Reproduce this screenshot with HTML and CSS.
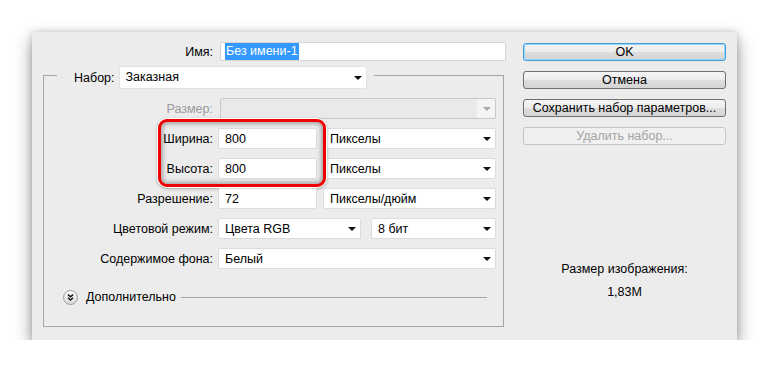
FILE: index.html
```html
<!DOCTYPE html>
<html lang="ru">
<head>
    <meta charset="UTF-8">
    <meta name="viewport" content="width=device-width, initial-scale=1.0">
    <title>Новый документ</title>
    <link rel="stylesheet" href="styles.css">
</head>
<body>
    <div class="dialog">
        <div class="main">
            <div class="name-row">
                <span class="label">Имя:</span>
                <div class="field name-field"><span class="selected">Без имени-1</span></div>
            </div>

            <fieldset class="preset">
                <legend class="preset-legend">
                    <span class="legend-label">Набор:</span>
                    <div class="select preset-select">Заказная<i class="arrow"></i></div>
                </legend>

                <div class="row">
                    <span class="label disabled">Размер:</span>
                    <div class="select select-disabled size-select"><i class="arrow"></i></div>
                </div>

                <div class="highlight-group">
                    <div class="row">
                        <span class="label">Ширина:</span>
                        <div class="field num-field">800</div>
                        <div class="select unit-select">Пикселы<i class="arrow"></i></div>
                    </div>
                    <div class="row">
                        <span class="label">Высота:</span>
                        <div class="field num-field">800</div>
                        <div class="select unit-select">Пикселы<i class="arrow"></i></div>
                    </div>
                    <div class="red-frame"></div>
                </div>

                <div class="row">
                    <span class="label">Разрешение:</span>
                    <div class="field num-field">72</div>
                    <div class="select unit-select">Пикселы/дюйм<i class="arrow"></i></div>
                </div>

                <div class="row">
                    <span class="label">Цветовой режим:</span>
                    <div class="select mode-select">Цвета RGB<i class="arrow"></i></div>
                    <div class="select bits-select">8 бит<i class="arrow"></i></div>
                </div>

                <div class="row">
                    <span class="label">Содержимое фона:</span>
                    <div class="select wide-select">Белый<i class="arrow"></i></div>
                </div>

                <div class="advanced">
                    <svg class="adv-icon" width="15" height="15" viewBox="0 0 15 15">
                        <defs>
                            <linearGradient id="advBg" x1="0" y1="0" x2="0" y2="1">
                                <stop offset="0" stop-color="#ffffff"/>
                                <stop offset="1" stop-color="#d6d6d6"/>
                            </linearGradient>
                        </defs>
                        <circle cx="7.5" cy="7.5" r="7" fill="url(#advBg)" stroke="#9a9a9a"/>
                        <path d="M5 4.6 L7.5 6.8 L10 4.6 M5 7.8 L7.5 10 L10 7.8" fill="none" stroke="#111" stroke-width="1.4"/>
                    </svg>
                    <span class="adv-text">Дополнительно</span>
                    <span class="adv-line"></span>
                </div>
            </fieldset>
        </div>

        <div class="side">
            <button class="btn btn-default">OK</button>
            <button class="btn">Отмена</button>
            <button class="btn">Сохранить набор параметров...</button>
            <button class="btn" disabled>Удалить набор...</button>

            <div class="info">
                <p>Размер изображения:</p>
                <p class="info-value">1,83M</p>
            </div>
        </div>
    </div>
</body>
</html>
```

FILE: styles.css
```css
* {
    box-sizing: border-box;
    margin: 0;
    padding: 0;
}

body {
    background-color: #ffffff;
    font-family: 'Liberation Sans', Arial, sans-serif;
    font-size: 12.5px;
    color: #000000;
}

.dialog {
    width: 705px;
    height: 308px;
    margin: 32px 0 0 32px;
    padding: 10px 11px 0 11px;
    background-color: #ececec;
    display: flex;
    box-shadow: 0 7px 16px rgba(0, 0, 0, 0.42), 0 0 6px rgba(0, 0, 0, 0.15);
}

.main {
    width: 463px;
}

.label {
    flex: none;
    text-align: right;
    white-space: nowrap;
}

.label.disabled {
    color: #9b9b9b;
}

.name-row {
    display: flex;
    align-items: center;
    height: 19px;
}

.name-row .label {
    width: 170px;
    margin-right: 7px;
}

.field,
.select {
    position: relative;
    height: 21px;
    line-height: 21px;
    padding-left: 6px;
    background-color: #ffffff;
    border: 1px solid #dcdcdc;
    border-radius: 2px;
    white-space: nowrap;
}

.name-field {
    width: 286px;
    height: 19px;
    line-height: 17px;
    padding-left: 4px;
    border-color: #d4d4d4;
}

.selected {
    display: inline-block;
    padding: 0 1px;
    background-color: #3399ff;
    color: #ffffff;
}

.arrow {
    position: absolute;
    right: 4px;
    top: 8px;
    width: 0;
    height: 0;
    border-left: 4px solid transparent;
    border-right: 4px solid transparent;
    border-top: 4px solid #111111;
}

/* fieldset with the preset selector in its legend */
.preset {
    width: 461px;
    padding: 0 7px 21px 0;
    border: 1px solid #a6a6a6;
}

.preset-legend {
    display: flex;
    align-items: center;
    margin-left: 13px;
    padding: 5px 7px 0 17px;
}

.preset-select {
    width: 248px;
    height: 23px;
    line-height: 21px;
    margin-left: 4px;
    border-color: #e2e2e2;
}

.preset-select .arrow {
    top: 9px;
}

.row {
    display: flex;
    align-items: center;
    height: 21px;
    margin-top: 9px;
}

.row .label {
    width: 169px;
    margin-right: 5px;
}

.size-select {
    width: 276px;
    margin-left: 2px;
    background: linear-gradient(to right, #e9e9e9 0, #e9e9e9 calc(100% - 18px), #f4f4f4 calc(100% - 18px));
    border-color: #c9c9c9;
}

.size-select .arrow {
    border-top-color: #a8a8a8;
}

.num-field {
    width: 99px;
}

.unit-select {
    width: 173px;
    margin-left: 6px;
}

.mode-select {
    width: 143px;
}

.bits-select {
    width: 125px;
    margin-left: 10px;
}

.wide-select {
    width: 278px;
}

.highlight-group {
    position: relative;
}

.red-frame {
    position: absolute;
    left: 114px;
    top: -9px;
    width: 168px;
    height: 68px;
    border: 3px solid #f00000;
    border-radius: 9px;
    box-shadow: 0 0 0 1px #ffffff, 0 1px 3px 1px rgba(0, 0, 0, 0.3), inset 0 0 4px 2px rgba(0, 0, 0, 0.3);
    pointer-events: none;
}

.advanced {
    display: flex;
    align-items: center;
    height: 16px;
    margin-top: 20px;
    padding-left: 19px;
    padding-right: 9px;
}

.adv-icon {
    flex: none;
    margin-right: 8px;
}

.adv-text {
    flex: none;
}

.adv-line {
    flex: 1;
    height: 1px;
    margin-left: 5px;
    background-color: #a6a6a6;
}

/* right column */
.side {
    width: 203px;
    margin-left: 17px;
    display: flex;
    flex-direction: column;
}

.btn {
    height: 18px;
    margin-top: 10px;
    font-family: inherit;
    font-size: 12.5px;
    color: #000000;
    border: 1px solid #707070;
    border-radius: 3px;
    background: linear-gradient(#f4f4f4 0, #ececec 50%, #dedede 50%, #d4d4d4 100%);
}

.btn-default {
    margin-top: 1px;
    border-color: #3a9de0;
    box-shadow: inset 0 0 0 1px #9fd3f5;
}

.btn:disabled {
    color: #a3a3a3;
    border-color: #c4c4c4;
    background: #f0f0f0;
}

.info {
    margin-top: 117px;
    text-align: center;
    line-height: 15px;
}

.info-value {
    margin-top: 8px;
}
```
